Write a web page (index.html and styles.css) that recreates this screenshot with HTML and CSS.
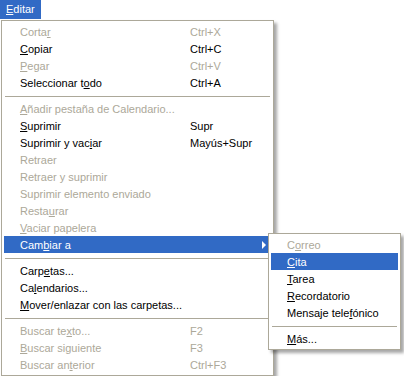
FILE: index.html
```html
<!DOCTYPE html>
<html lang="es">
<head>
    <meta charset="UTF-8">
    <title>Editar</title>
    <link rel="stylesheet" href="styles.css">
</head>
<body>

    <div class="menubar">
        <span class="top-item"><u>E</u>ditar</span>
    </div>

    <div class="menu">
        <div class="item off"><span class="label">Corta<u>r</u></span><span class="key">Ctrl+X</span></div>
        <div class="item"><span class="label"><u>C</u>opiar</span><span class="key">Ctrl+C</span></div>
        <div class="item off"><span class="label"><u>P</u>egar</span><span class="key">Ctrl+V</span></div>
        <div class="item"><span class="label">Seleccionar t<u>o</u>do</span><span class="key">Ctrl+A</span></div>
        <div class="sep"></div>
        <div class="item off"><span class="label"><u>A</u>ñadir pestaña de Calendario...</span></div>
        <div class="item"><span class="label"><u>S</u>uprimir</span><span class="key">Supr</span></div>
        <div class="item"><span class="label">Suprimir y vac<u>i</u>ar</span><span class="key">Mayús+Supr</span></div>
        <div class="item off"><span class="label">Retraer</span></div>
        <div class="item off"><span class="label">Retraer y suprimir</span></div>
        <div class="item off"><span class="label">Suprimir elemento enviado</span></div>
        <div class="item off"><span class="label">Resta<u>u</u>rar</span></div>
        <div class="item off"><span class="label"><u>V</u>aciar papelera</span></div>
        <div class="item active"><span class="label">Cam<u>b</u>iar a</span><span class="arrow"></span></div>
        <div class="sep"></div>
        <div class="item"><span class="label">Carp<u>e</u>tas...</span></div>
        <div class="item"><span class="label">Ca<u>l</u>endarios...</span></div>
        <div class="item"><span class="label"><u>M</u>over/enlazar con las carpetas...</span></div>
        <div class="sep"></div>
        <div class="item off"><span class="label">Buscar te<u>x</u>to...</span><span class="key">F2</span></div>
        <div class="item off"><span class="label"><u>B</u>uscar siguiente</span><span class="key">F3</span></div>
        <div class="item off"><span class="label">Buscar an<u>t</u>erior</span><span class="key">Ctrl+F3</span></div>

        <div class="menu submenu">
            <div class="item off"><span class="label">C<u>o</u>rreo</span></div>
            <div class="item active"><span class="label"><u>C</u>ita</span></div>
            <div class="item"><span class="label"><u>T</u>area</span></div>
            <div class="item"><span class="label"><u>R</u>ecordatorio</span></div>
            <div class="item"><span class="label">Mensaje tele<u>f</u>ónico</span></div>
            <div class="sep"></div>
            <div class="item"><span class="label"><u>M</u>ás...</span></div>
        </div>
    </div>

</body>
</html>
```

FILE: styles.css
```css
body { margin: 0; background: #fff; font-family: "Liberation Sans", Arial, sans-serif; font-size: 11px; color: #000; }
u { text-decoration: underline; text-underline-offset: 1px; }

.menubar { height: 19px; display: flex; }
.top-item { background: #316ac5; color: #fff; width: 41px; height: 19px; line-height: 19px; padding-left: 6px; box-sizing: border-box; }

.menu { position: relative; width: 273px; margin: 1px 0 0 1px; padding: 2px; box-sizing: border-box; border: 1px solid #aca899; background: #fff; box-shadow: 3px 3px 3px rgba(0, 0, 0, 0.35); }
.item { display: flex; align-items: center; height: 17px; padding-left: 16px; white-space: nowrap; position: relative; }
.item .label { width: 170px; }
.item .key { flex: 1; }
.off { color: #aca899; }
.active { background: #316ac5; color: #fff; }
.sep { height: 1px; background: #aca899; margin: 5px 1px 3px; }

.arrow { position: absolute; right: 5px; top: 5px; width: 0; height: 0; border-top: 4px solid transparent; border-bottom: 4px solid transparent; border-left: 4px solid #fff; }

.submenu { position: absolute; left: 266px; top: 212px; width: 133px; margin: 0; }
.submenu .label { width: auto; }
```
